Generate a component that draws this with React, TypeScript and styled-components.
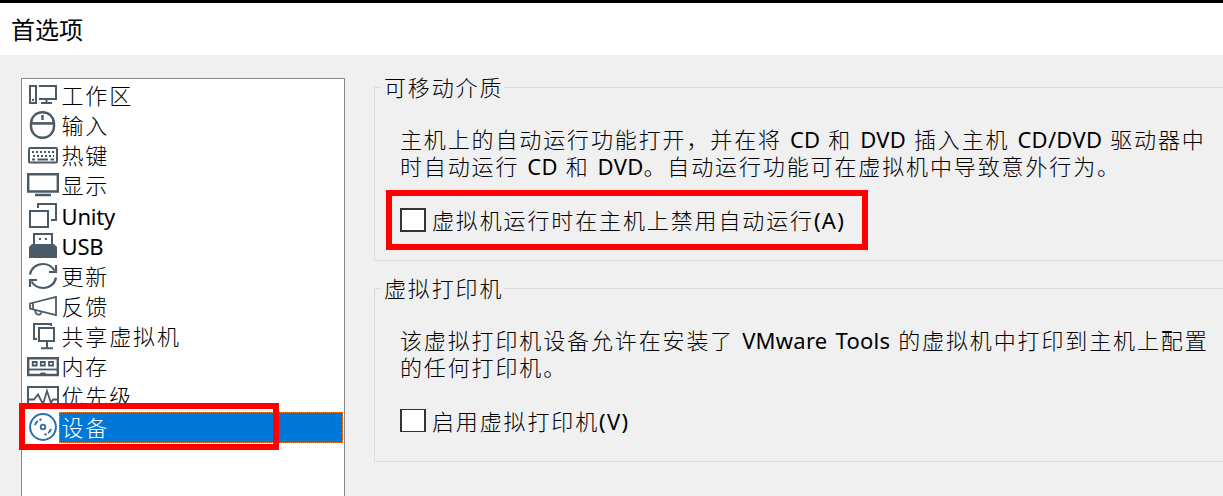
import React from "react";
import styled, { createGlobalStyle } from "styled-components";

const Global = createGlobalStyle`
  *, *::before, *::after { box-sizing: border-box; }
  body { margin: 0; background: #f0f0f0; overflow: hidden; }
`;

const Window = styled.div`
  position: relative;
  display: flex;
  flex-direction: column;
  height: 496px;
  overflow: hidden;
  border-top: 3px solid #000;
  background: #f0f0f0;
  color: #000;
  font-family: "Noto Sans", "Noto Sans CJK SC", sans-serif;
  font-size: 22px;
`;

const TitleBar = styled.header`
  flex: none;
  height: 52px;
  padding-left: 11px;
  background: #fff;
  font-family: "Noto Sans CJK SC", sans-serif;
  font-size: 24px;
  line-height: 51px;
`;

const Content = styled.main`
  flex: 1;
  display: flex;
  gap: 29px;
  padding: 23px 0 0 21px;
  min-height: 0;
`;

const List = styled.ul`
  flex: none;
  width: 324px;
  height: 440px;
  margin: 0;
  padding: 2px 1px 0 5px;
  list-style: none;
  border: 1px solid #828790;
  background: #fff;
`;

const Row = styled.li<{ $height: number }>`
  display: flex;
  height: ${(p) => p.$height}px;
`;

const Icon = styled.svg<{ $active: boolean }>`
  flex: none;
  width: 32px;
  height: 30px;
  color: ${(p) => (p.$active ? "#2a6fa8" : "#4a5b67")};
  fill: none;
  stroke: currentColor;
  stroke-width: 2;
`;

const RowLabel = styled.span<{ $active: boolean }>`
  flex: 1;
  padding-left: ${(p) => (p.$active ? 1.5 : 2.5)}px;
  line-height: ${(p) => (p.$active ? 28 : 29)}px;
  white-space: nowrap;
  border: ${(p) => (p.$active ? "1px dotted #ff8728" : "0")};
  background: ${(p) => (p.$active ? "#0078d7" : "transparent")};
  color: ${(p) => (p.$active ? "#fff" : "#000")};
`;

const Han = styled.span`
  font-family: "Noto Sans CJK SC", sans-serif;
  font-weight: 300;
  line-height: 0;
  letter-spacing: 1.87px;
`;

const Latin = styled.span<{ $spacing?: number }>`
  line-height: 0;
  letter-spacing: ${(p) => p.$spacing ?? 0.25}px;
  word-spacing: 2px;
`;

const Groups = styled.div`
  flex: 1;
  display: flex;
  flex-direction: column;
  gap: 27px;
  padding-top: 9px;
`;

const Group = styled.section`
  height: 174px;
  margin-right: -10px;
  padding-left: 25px;
  border: 1px solid #dcdcdc;
`;

const GroupTitle = styled.h2`
  width: 123px;
  height: 30px;
  margin: -14px 0 0 -19px;
  padding-left: 3px;
  background: #f0f0f0;
  font-size: 22px;
  font-weight: 400;
  line-height: 26px;
  white-space: nowrap;
`;

const Description = styled.p`
  height: 54px;
  margin: 22px 0 0;
  line-height: 26.5px;
  white-space: nowrap;
`;

const Option = styled.label`
  display: flex;
  align-items: center;
  gap: 6px;
  height: 30px;
  margin-top: 27px;
  white-space: nowrap;
`;

const OptionText = styled.span`
  padding-bottom: 3px;
  line-height: 27px;
`;

const Box = styled.span<{ $height: number }>`
  width: 26px;
  height: ${(p) => p.$height}px;
  margin-bottom: ${(p) => 28 - p.$height}px;
  border: 2px solid #333;
  border-top-width: ${(p) => p.$height - 22}px;
  border-bottom-width: ${(p) => p.$height - 22}px;
  background: #fff;
`;

const Highlight = styled.div<{ $x: number; $y: number; $w: number; $h: number }>`
  position: absolute;
  left: ${(p) => p.$x}px;
  top: ${(p) => p.$y - 3}px;
  width: ${(p) => p.$w}px;
  height: ${(p) => p.$h}px;
  border: 6px solid #f00;
  pointer-events: none;
`;

const Cover = styled.div`
  height: 3px;
  background: #fff;
`;

const icons: Record<string, React.ReactNode> = {
  workspace: (
    <>
      <path d="M3 5H9V22H3ZM12 5H29V18H12M19.5 18V22M14 22H25" />
      <path d="M5 18h2v2H5z" fill="currentColor" stroke="none" />
    </>
  ),
  mouse: (
    <>
      <rect x="4" y="1.2" width="23" height="25.6" rx="11.2" strokeWidth="2.4" />
      <path d="M4 12.4H27" strokeWidth="2.6" />
      <path d="M15.5 4V9" strokeWidth="2.4" />
    </>
  ),
  keyboard: (
    <>
      <rect x="2" y="7" width="28" height="14.5" rx="1" />
      <path d="M5 11H28M6 15H27" strokeDasharray="2 2" />
      <path d="M5 18.5H8M10.5 18.5H21M23.5 18.5H27" />
    </>
  ),
  display: (
    <path d="M1.2 3.2H30.8V20.5H1.2ZM8 24H24" strokeWidth="2.4" />
  ),
  unity: <path d="M3 9H21V25H3ZM11 6V2H29V18H24" />,
  usb: (
    <>
      <path d="M7 13V2H25V13" />
      <path d="M5 12H27L30 15V26H2V15Z" fill="currentColor" stroke="none" />
      <path d="M12 6h2v2h-2zM18 6h2v2h-2z" fill="currentColor" stroke="none" />
    </>
  ),
  update: (
    <>
      <path d="M3 12.5C4 6 9.5 2 16 2C21 2 25 4.5 27.5 8.5M29 15.5C28 22 22.5 26 16 26C11 26 7 23.5 4.5 19.5" strokeWidth="2.2" />
      <path d="M29 3V10H22M3 25V18H10" strokeWidth="2.2" />
    </>
  ),
  feedback: (
    <path d="M3 11.5L29 5V23L3 16.5ZM6 11V17M8 18C8.5 24 14 24 14.5 19.5" strokeWidth="1.8" />
  ),
  shared: (
    <path d="M10 17H7V2H24V4M12 6H27V19H12ZM20 19V26M14 26.2H26" />
  ),
  memory: (
    <>
      <path d="M1.2 6.2H30.8V23H1.2Z" strokeWidth="2.4" />
      <path d="M0 17.5H32" strokeWidth="1.8" />
      <path d="M5.7 10H9.7V13.5H5.7ZM13.8 10H17.8V13.5H13.8ZM22 10H26V13.5H22Z" strokeWidth="1.8" />
      <path d="M11 24L14 20.5H18L21 24Z" fill="currentColor" stroke="none" />
    </>
  ),
  priority: (
    <>
      <path d="M1 29V5H31V29" />
      <path d="M1 17.5H7L11 12.5L16 22L20 9L24 21L26 17.5H31" strokeWidth="1.8" />
    </>
  ),
  device: (
    <>
      <circle cx="16" cy="15" r="12.9" />
      <circle cx="16" cy="15" r="2.3" strokeWidth="1.8" />
      <path d="M8 13C8.7 11 9.7 9.8 11 9M12.5 8L14.5 7.3M24 17C23.3 19 22.3 20.2 21 21M19.5 22L17.5 22.7" />
    </>
  ),
};

const rows = [
  { icon: "workspace", label: "工作区" },
  { icon: "mouse", label: "输入" },
  { icon: "keyboard", label: "热键" },
  { icon: "display", label: "显示", height: 31 },
  { icon: "unity", label: "Unity", latin: true },
  { icon: "usb", label: "USB", latin: true },
  { icon: "update", label: "更新" },
  { icon: "feedback", label: "反馈" },
  { icon: "shared", label: "共享虚拟机" },
  { icon: "memory", label: "内存" },
  { icon: "priority", label: "优先级" },
  { icon: "device", label: "设备", height: 31, active: true },
];

export default function App() {
  return (
    <Window>
      <Global />
      <TitleBar>首选项</TitleBar>
      <Content>
        <List>
          {rows.map(({ icon, label, height = 30, latin, active = false }) => (
            <Row key={icon} $height={height}>
              <Icon viewBox="0 0 32 30" $active={active}>{icons[icon]}</Icon>
              <RowLabel $active={active}>
                {latin ? <Latin $spacing={-0.2}>{label}</Latin> : <Han>{label}</Han>}
              </RowLabel>
            </Row>
          ))}
        </List>
        <Groups>
          <Group>
            <GroupTitle><Han>可移动介质</Han></GroupTitle>
            <Description>
              <Han>主机上的自动运行功能打开，并在将</Han><Latin> CD </Latin><Han>和</Han><Latin> DVD </Latin><Han>插入主机</Han><Latin> CD/DVD </Latin><Han>驱动器中</Han>
              <br />
              <Han>时自动运行</Han><Latin> CD </Latin><Han>和</Han><Latin> DVD</Latin><Han>。自动运行功能可在虚拟机中导致意外行为。</Han>
            </Description>
            <Option>
              <Box $height={24} />
              <OptionText><Han>虚拟机运行时在主机上禁用自动运行</Han><Latin $spacing={1.3}>(A)</Latin></OptionText>
            </Option>
          </Group>
          <Group>
            <GroupTitle><Han>虚拟打印机</Han></GroupTitle>
            <Description>
              <Han>该虚拟打印机设备允许在安装了</Han><Latin> VMware Tools </Latin><Han>的虚拟机中打印到主机上配置</Han>
              <br />
              <Han>的任何打印机。</Han>
            </Description>
            <Option>
              <Box $height={23} />
              <OptionText><Han>启用虚拟打印机</Han><Latin $spacing={1.3}>(V)</Latin></OptionText>
            </Option>
          </Group>
        </Groups>
      </Content>
      <Highlight $x={19} $y={403} $w={260} $h={47}><Cover /></Highlight>
      <Highlight $x={386} $y={190} $w={482} $h={60} />
    </Window>
  );
}
